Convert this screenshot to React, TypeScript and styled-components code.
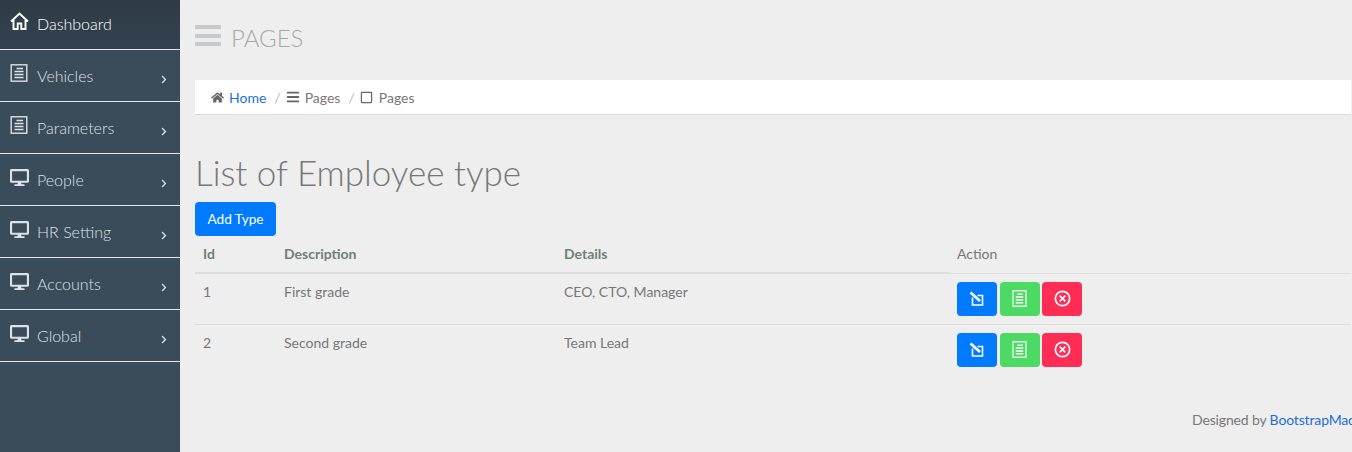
import React from "react";
import styled, { createGlobalStyle } from "styled-components";
import { FaHome, FaBars, FaDesktop, FaRegSquare, FaChevronRight } from "react-icons/fa";

const Global = createGlobalStyle`
  html, body { margin: 0; padding: 0; width: 1352px; height: 452px; overflow: hidden; background: #eee; }
  body { font-family: Lato, "Open Sans", sans-serif; font-size: 14px; color: #777; }
  * { box-sizing: border-box; }
`;
const Page = styled.div`display: flex; width: 1352px; height: 452px; overflow: hidden;`;
const Side = styled.nav`width: 180px; flex: none; background: #3a4b59; display: flex; flex-direction: column;`;
const Item = styled.div<{ $first?: boolean; $labelX: number }>`
  position: relative;
  height: ${p => (p.$first ? 50 : 52)}px;
  flex: none;
  border-bottom: 1px solid #e4e8eb;
  padding: ${p => (p.$first ? "14px" : "16px")} 0 0 10px;
  display: flex;
  align-items: flex-start;
  color: ${p => (p.$first ? "#fff" : "#dbe2e8")};
  background: ${p => (p.$first ? "linear-gradient(#2f3c48,#33414e)" : "#3a4b59")};
  font-size: 16px;
  line-height: 20px;
  font-weight: 300;
  svg.main { flex: none; margin-top: -2px; margin-right: ${p => p.$labelX}px; }
`;
const Arrow = styled(FaChevronRight)`
  position: absolute; left: 161px; top: 25px; width: 6px; height: 9px; color: #d5dce1;
`;
const Main = styled.main`flex: 1; min-width: 0; display: flex; flex-direction: column; padding: 0 1px 0 15px;`;
const Top = styled.header`
  height: 80px; display: flex; align-items: flex-start; padding-top: 24px; gap: 10px;
  font-size: 24px; font-weight: 300; line-height: 28px; color: #a8a8a8;
`;
const Burger = styled.div`
  width: 26px; height: 21px; margin-top: 1px; display: flex; flex-direction: column; justify-content: space-between;
  i { display: block; height: 4px; background: #c8c9cb; }
`;
const Crumb = styled.div`
  height: 35px; background: #fff; border-bottom: 1px solid #ddd; display: flex; align-items: center;
  padding: 0 0 0 16px; font-size: 14px; color: #777;
`;
const Link = styled.a`color: #1d6fd8; margin-left: 5px;`;
const Sep = styled.span`color: #bbb; margin: 0 5px 0 8px;`;
const CrumbIcon = styled.span<{ $gap: number }>`display: inline-flex; margin-right: ${p => p.$gap}px; color: #666;`;
const Title = styled.h1`
  margin: 36px 0 0; font-size: 35px; line-height: 43px; font-weight: 300; color: #777;
`;
const AddBtn = styled.button`
  margin-top: 8px; align-self: flex-start; width: 81px; height: 34px; border: 0; border-radius: 4px;
  background: #007bff; color: #fff; font: 400 13.6px Lato, sans-serif; padding: 0;
`;
const Table = styled.table`
  border-collapse: collapse; width: 1156px; table-layout: fixed; font-size: 14px;
`;
const Th = styled.th<{ $w: number; $plain?: boolean }>`
  width: ${p => p.$w}px; height: 37px; padding: 0 8px 1px; text-align: left; vertical-align: middle;
  color: ${p => (p.$plain ? "#777" : "#6f8078")}; font-weight: ${p => (p.$plain ? 400 : 700)};
  border-bottom: ${p => (p.$plain ? "1px solid #ddd" : "2px solid #ddd")};
`;
const Td = styled.td`
  height: 51px; padding: 8px; vertical-align: top; border-bottom: 1px solid #ddd; line-height: 20px;
  tr:last-child & { border-bottom: 0; }
`;
const Actions = styled.div`display: flex; gap: 2.5px;`;
const IconBtn = styled.button<{ $c: string }>`
  width: 40px; height: 34px; border: 0; border-radius: 4px; padding: 0; background: ${p => p.$c}; color: #fff;
  display: flex; align-items: center; justify-content: center;
`;
const Footer = styled.footer`
  margin-top: 35px; padding-left: 997px; white-space: nowrap; font-size: 14px; line-height: 20px; color: #777;
  letter-spacing: -0.15px;
  a { color: #1d6fd8; }
`;

const Doc = ({ w = 18, h = 18, cls }: { w?: number; h?: number; cls?: string }) => (
  <svg className={cls} width={w} height={h} viewBox="0 0 18 18" preserveAspectRatio="none" fill="none" stroke="currentColor" strokeWidth="1.4">
    <rect x="1.2" y="0.8" width="15.6" height="16.4" />
    <path d="M6.5 4.5h6.5M4.5 7.5h9M4.5 10.5h9M4.5 13.5h9" strokeWidth="1.6" />
  </svg>
);
const House = () => (
  <svg className="main" width="19" height="18" viewBox="0 0 19 18" fill="none" stroke="currentColor" strokeWidth="1.9">
    <path d="M1 9.5 9.5 1.5 18 9.5M3.5 8v9h4.2v-5.5h3.6V17h4.2V8" />
  </svg>
);
const Edit = () => (
  <svg width="16" height="16" viewBox="0 0 16 16" fill="none" stroke="currentColor" strokeWidth="1.6">
    <path d="M3.5 6.5v7.5h10V4.5H8.5" />
    <path d="M1.5 1.5 11 10" strokeWidth="2.6" />
  </svg>
);
const Cancel = () => (
  <svg width="17" height="17" viewBox="0 0 15 15" fill="none" stroke="currentColor" strokeWidth="1.5">
    <circle cx="7.5" cy="7.5" r="6.3" />
    <path d="M5 5l5 5M10 5l-5 5" />
  </svg>
);
const Desk = () => <FaDesktop className="main" size={19} />;

const nav = [
  { t: "Vehicles", k: "doc", m: 9 },
  { t: "Parameters", k: "doc", m: 9 },
  { t: "People", k: "desk", m: 8 },
  { t: "HR Setting", k: "desk", m: 8 },
  { t: "Accounts", k: "desk", m: 8 },
  { t: "Global", k: "desk", m: 8 },
];
const rows = [
  ["1", "First grade", "CEO, CTO, Manager"],
  ["2", "Second grade", "Team Lead"],
];

export default function App() {
  return (
    <Page>
      <Global />
      <Side>
        <Item $first $labelX={8}><House />Dashboard</Item>
        {nav.map(n => (
          <Item key={n.t} $labelX={n.m}>
            {n.k === "doc" ? <Doc cls="main" /> : <Desk />}
            {n.t}
            <Arrow />
          </Item>
        ))}
      </Side>
      <Main>
        <Top><Burger><i /><i /><i /></Burger>PAGES</Top>
        <Crumb>
          <FaHome size={13} color="#666" /><Link>Home</Link><Sep>/</Sep>
          <CrumbIcon $gap={5}><FaBars size={14} /></CrumbIcon>Pages<Sep>/</Sep>
          <CrumbIcon $gap={6}><FaRegSquare size={13} /></CrumbIcon>Pages
        </Crumb>
        <Title>List of Employee type</Title>
        <AddBtn>Add Type</AddBtn>
        <Table>
          <thead>
            <tr>
              <Th $w={81}>Id</Th><Th $w={280}>Description</Th><Th $w={393}>Details</Th><Th $w={402} $plain>Action</Th>
            </tr>
          </thead>
          <tbody>
            {rows.map(r => (
              <tr key={r[0]}>
                <Td>{r[0]}</Td><Td>{r[1]}</Td><Td>{r[2]}</Td>
                <Td>
                  <Actions>
                    <IconBtn $c="#007bff"><Edit /></IconBtn>
                    <IconBtn $c="#4cd964"><Doc w={15} h={17} /></IconBtn>
                    <IconBtn $c="#ff2d55"><Cancel /></IconBtn>
                  </Actions>
                </Td>
              </tr>
            ))}
          </tbody>
        </Table>
        <Footer>Designed by <a>BootstrapMade</a></Footer>
      </Main>
    </Page>
  );
}
